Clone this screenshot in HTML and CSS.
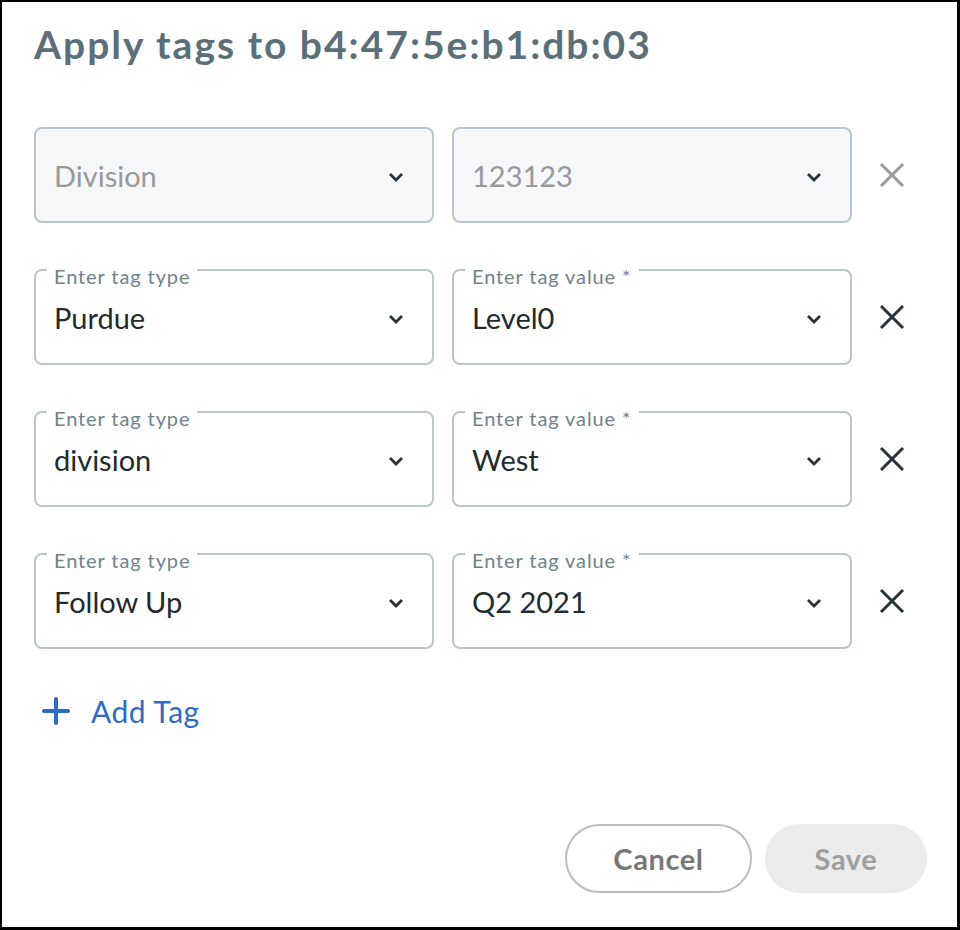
FILE: index.html
```html
<!DOCTYPE html>
<html lang="en">
<head>
  <meta charset="UTF-8">
  <title>Apply tags</title>
  <link rel="stylesheet" href="styles.css">
</head>
<body>

  <div class="dialog">
    <h1 class="title">Apply tags to b4:47:5e:b1:db:03</h1>

    <div class="tag-list">
      <!-- existing tag, locked -->
      <div class="tag-row">
        <div class="field disabled">
          <span class="value">Division</span>
          <svg class="chevron" viewBox="0 0 16 10"><polyline points="2,2 8,8 14,2"></polyline></svg>
        </div>
        <div class="field disabled">
          <span class="value">123123</span>
          <svg class="chevron" viewBox="0 0 16 10"><polyline points="2,2 8,8 14,2"></polyline></svg>
        </div>
        <button class="remove muted">
          <svg viewBox="0 0 26 26"><line x1="2" y1="2" x2="24" y2="24"></line><line x1="24" y1="2" x2="2" y2="24"></line></svg>
        </button>
      </div>

      <div class="tag-row">
        <div class="field">
          <span class="label">Enter tag type</span>
          <span class="value">Purdue</span>
          <svg class="chevron" viewBox="0 0 16 10"><polyline points="2,2 8,8 14,2"></polyline></svg>
        </div>
        <div class="field">
          <span class="label">Enter tag value *</span>
          <span class="value">Level0</span>
          <svg class="chevron" viewBox="0 0 16 10"><polyline points="2,2 8,8 14,2"></polyline></svg>
        </div>
        <button class="remove">
          <svg viewBox="0 0 26 26"><line x1="2" y1="2" x2="24" y2="24"></line><line x1="24" y1="2" x2="2" y2="24"></line></svg>
        </button>
      </div>

      <div class="tag-row">
        <div class="field">
          <span class="label">Enter tag type</span>
          <span class="value">division</span>
          <svg class="chevron" viewBox="0 0 16 10"><polyline points="2,2 8,8 14,2"></polyline></svg>
        </div>
        <div class="field">
          <span class="label">Enter tag value *</span>
          <span class="value">West</span>
          <svg class="chevron" viewBox="0 0 16 10"><polyline points="2,2 8,8 14,2"></polyline></svg>
        </div>
        <button class="remove">
          <svg viewBox="0 0 26 26"><line x1="2" y1="2" x2="24" y2="24"></line><line x1="24" y1="2" x2="2" y2="24"></line></svg>
        </button>
      </div>

      <div class="tag-row">
        <div class="field">
          <span class="label">Enter tag type</span>
          <span class="value">Follow Up</span>
          <svg class="chevron" viewBox="0 0 16 10"><polyline points="2,2 8,8 14,2"></polyline></svg>
        </div>
        <div class="field">
          <span class="label">Enter tag value *</span>
          <span class="value">Q2 2021</span>
          <svg class="chevron" viewBox="0 0 16 10"><polyline points="2,2 8,8 14,2"></polyline></svg>
        </div>
        <button class="remove">
          <svg viewBox="0 0 26 26"><line x1="2" y1="2" x2="24" y2="24"></line><line x1="24" y1="2" x2="2" y2="24"></line></svg>
        </button>
      </div>
    </div>

    <button class="add-tag">
      <svg viewBox="0 0 28 28"><line x1="14" y1="2" x2="14" y2="26"></line><line x1="2" y1="14" x2="26" y2="14"></line></svg>
      Add Tag
    </button>

    <div class="actions">
      <button class="btn btn-cancel">Cancel</button>
      <button class="btn btn-save">Save</button>
    </div>
  </div>

</body>
</html>
```

FILE: styles.css
```css
* {
  box-sizing: border-box;
}

body {
  margin: 0;
  background: #fff;
  font-family: Lato, "Noto Sans", sans-serif;
}

.dialog {
  height: 930px;
  border: 2px solid #000;
  border-right-width: 3px;
  border-bottom-width: 3px;
  padding: 19px 30px 34px 32px;
  display: flex;
  flex-direction: column;
}

.title {
  margin: 0;
  font-size: 39px;
  line-height: 46px;
  font-weight: 700;
  color: #5b6f79;
  letter-spacing: 2px;
}

.tag-list {
  margin-top: 60px;
  display: flex;
  flex-direction: column;
  gap: 46px;
}

.tag-row {
  display: flex;
  align-items: center;
  gap: 18px;
}

.field {
  position: relative;
  width: 400px;
  height: 96px;
  border: 2px solid #bac6cd;
  border-radius: 8px;
  padding: 0 28px 0 18px;
  display: flex;
  align-items: center;
  justify-content: space-between;
}

.field.disabled {
  background: #f5f7f9;
}

.label {
  position: absolute;
  top: -6px;
  left: 11px;
  padding: 0 7px;
  background: #fff;
  font-size: 20px;
  line-height: 22px;
  letter-spacing: 0.9px;
  color: #6e838b;
}

.value {
  font-size: 29px;
  color: #222a2e;
}

.disabled .value {
  color: #999;
}

.chevron {
  margin-top: 4px;
  width: 16px;
  height: 10px;
  fill: none;
  stroke: #263238;
  stroke-width: 2.8;
}

.remove {
  margin-left: 9px;
  width: 26px;
  height: 26px;
  padding: 0;
  border: none;
  background: none;
  cursor: pointer;
}

.remove svg {
  width: 26px;
  height: 26px;
  display: block;
  stroke: #263238;
  stroke-width: 3;
}

.remove.muted svg {
  stroke: #9a9a9a;
}

.add-tag {
  align-self: flex-start;
  margin-top: 44px;
  margin-left: 8px;
  padding: 0;
  border: none;
  background: none;
  display: flex;
  align-items: center;
  gap: 21px;
  font-family: Lato, sans-serif;
  font-size: 30px;
  letter-spacing: 0.5px;
  color: #2b6cc4;
  cursor: pointer;
}

.add-tag svg {
  width: 28px;
  height: 28px;
  stroke: #2b6cc4;
  stroke-width: 4;
  stroke-linecap: round;
}

.actions {
  margin-top: auto;
  display: flex;
  justify-content: flex-end;
  gap: 13px;
}

.btn {
  height: 69px;
  border-radius: 35px;
  font-family: Lato, sans-serif;
  font-size: 29px;
  font-weight: 700;
  letter-spacing: 0.6px;
  cursor: pointer;
}

.btn-cancel {
  width: 187px;
  border: 2px solid #bdbdbd;
  background: #fff;
  color: #777;
}

.btn-save {
  width: 162px;
  border: none;
  background: #ebebeb;
  color: #9e9e9e;
}
```
